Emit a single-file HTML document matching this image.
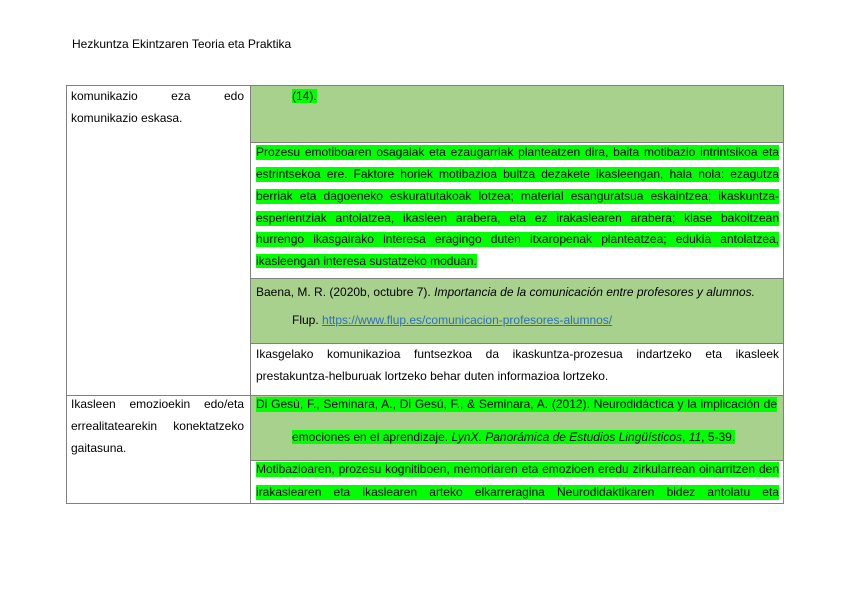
<!DOCTYPE html>
<html><head><meta charset="utf-8"><style>
*{margin:0;padding:0;box-sizing:border-box}
body{width:848px;height:599px;background:#fff;position:relative;font-family:"Liberation Sans",sans-serif;font-size:12px;color:#000;overflow:hidden}
.a{position:absolute;line-height:15px;white-space:nowrap}
.j{text-align:justify;text-align-last:justify;white-space:normal;height:15px;overflow:hidden}
.h{background:#00ff00}
.g{position:absolute;background:#a9d18e}
.b{position:absolute;background:#808080}
a{color:#2f6fb5;text-decoration:underline}
</style></head><body>
<div class="a" style="left:72px;top:37px">Hezkuntza Ekintzaren Teoria eta Praktika</div>

<div class="g" style="left:250px;top:85px;width:534px;height:57px"></div>
<div class="g" style="left:250px;top:278px;width:534px;height:65px"></div>
<div class="g" style="left:250px;top:395px;width:534px;height:65px"></div>

<div class="b" style="left:66px;top:85px;width:718px;height:1px"></div>
<div class="b" style="left:66px;top:503px;width:718px;height:1px"></div>
<div class="b" style="left:66px;top:85px;width:1px;height:419px"></div>
<div class="b" style="left:783px;top:85px;width:1px;height:419px"></div>
<div class="b" style="left:250px;top:85px;width:1px;height:419px"></div>
<div class="b" style="left:250px;top:142px;width:534px;height:1px"></div>
<div class="b" style="left:250px;top:278px;width:534px;height:1px"></div>
<div class="b" style="left:250px;top:343px;width:534px;height:1px"></div>
<div class="b" style="left:66px;top:395px;width:718px;height:1px"></div>
<div class="b" style="left:250px;top:460px;width:534px;height:1px"></div>

<div class="a j" style="left:71px;top:89px;width:173px">komunikazio eza edo</div>
<div class="a" style="left:71px;top:111px">komunikazio eskasa.</div>
<div class="a j" style="left:71px;top:397px;width:173px">Ikasleen emozioekin edo/eta</div>
<div class="a j" style="left:71px;top:419px;width:173px">errealitatearekin konektatzeko</div>
<div class="a" style="left:71px;top:441px">gaitasuna.</div>

<div class="a" style="left:292px;top:89px"><span class="h">(14).</span></div>

<div class="a j h" style="left:256px;top:145px;width:523px">Prozesu emotiboaren osagaiak eta ezaugarriak planteatzen dira, baita motibazio intrintsikoa eta</div>
<div class="a j h" style="left:256px;top:167px;width:523px">estrintsekoa ere. Faktore horiek motibazioa bultza dezakete ikasleengan, hala nola: ezagutza</div>
<div class="a j h" style="left:256px;top:189px;width:523px">berriak eta dagoeneko eskuratutakoak lotzea; material esanguratsua eskaintzea; ikaskuntza-</div>
<div class="a j h" style="left:256px;top:211px;width:523px">esperientziak antolatzea, ikasleen arabera, eta ez irakaslearen arabera; klase bakoitzean</div>
<div class="a j h" style="left:256px;top:232px;width:523px">hurrengo ikasgairako interesa eragingo duten itxaropenak planteatzea; edukia antolatzea,</div>
<div class="a" style="left:256px;top:254px"><span class="h">ikasleengan interesa sustatzeko moduan.</span></div>

<div class="a" style="left:256px;top:285px">Baena, M. R. (2020b, octubre 7). <i>Importancia de la comunicación entre profesores y alumnos.</i></div>
<div class="a" style="left:292px;top:313px">Flup. <a>https://www.flup.es/comunicacion-profesores-alumnos/</a></div>

<div class="a j" style="left:256px;top:347px;width:523px">Ikasgelako komunikazioa funtsezkoa da ikaskuntza-prozesua indartzeko eta ikasleek</div>
<div class="a" style="left:256px;top:369px">prestakuntza-helburuak lortzeko behar duten informazioa lortzeko.</div>

<div class="a j h" style="left:256px;top:397px;width:521px">Di Gesù, F., Seminara, A., Di Gesú, F., &amp; Seminara, A. (2012). Neurodidáctica y la implicación de</div>
<div class="a" style="left:292px;top:430px"><span class="h">emociones en el aprendizaje. <i>LynX. Panorámica de Estudios Lingüísticos</i>, <i>11</i>, 5-39.</span></div>

<div class="a j h" style="left:256px;top:462px;width:523px">Motibazioaren, prozesu kognitiboen, memoriaren eta emozioen eredu zirkularrean oinarritzen den</div>
<div class="a j h" style="left:256px;top:485px;width:523px">irakaslearen eta ikaslearen arteko elkarreragina Neurodidaktikaren bidez antolatu eta</div>
</body></html>
